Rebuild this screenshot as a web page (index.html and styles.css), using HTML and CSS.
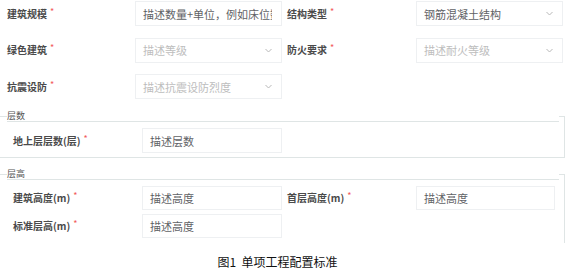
FILE: index.html
```html
<!DOCTYPE html>
<html lang="zh">
<head>
<meta charset="utf-8">
<link rel="stylesheet" href="styles.css">
</head>
<body>
<div class="page">
  <div class="grid top">
    <div class="label">建筑规模<span class="req">*</span></div>
    <div class="input"><span class="val clip">描述数量+单位，例如床位数</span></div>
    <div class="label">结构类型<span class="req">*</span></div>
    <div class="input select"><span class="val">钢筋混凝土结构</span><svg class="chev" width="7" height="5" viewBox="0 0 7 5"><path d="M0.5 1 L3.5 4 L6.5 1" fill="none" stroke="#b8b8b8" stroke-width="1"/></svg></div>

    <div class="label">绿色建筑<span class="req">*</span></div>
    <div class="input select"><span class="ph">描述等级</span><svg class="chev" width="7" height="5" viewBox="0 0 7 5"><path d="M0.5 1 L3.5 4 L6.5 1" fill="none" stroke="#b8b8b8" stroke-width="1"/></svg></div>
    <div class="label">防火要求<span class="req">*</span></div>
    <div class="input select"><span class="ph">描述耐火等级</span><svg class="chev" width="7" height="5" viewBox="0 0 7 5"><path d="M0.5 1 L3.5 4 L6.5 1" fill="none" stroke="#b8b8b8" stroke-width="1"/></svg></div>

    <div class="label">抗震设防<span class="req">*</span></div>
    <div class="input select"><span class="ph">描述抗震设防烈度</span><svg class="chev" width="7" height="5" viewBox="0 0 7 5"><path d="M0.5 1 L3.5 4 L6.5 1" fill="none" stroke="#b8b8b8" stroke-width="1"/></svg></div>
  </div>

  <fieldset class="group first">
    <legend>层数</legend>
    <div class="grid inner">
      <div class="label">地上层层数(层)<span class="req">*</span></div>
      <div class="input"><span class="val">描述层数</span></div>
    </div>
  </fieldset>

  <fieldset class="group second">
    <legend>层高</legend>
    <div class="grid inner rows2">
      <div class="label">建筑高度(m)<span class="req">*</span></div>
      <div class="input"><span class="val">描述高度</span></div>
      <div class="label">首层高度(m)<span class="req">*</span></div>
      <div class="input"><span class="val">描述高度</span></div>
      <div class="label">标准层高(m)<span class="req">*</span></div>
      <div class="input"><span class="val">描述高度</span></div>
    </div>
  </fieldset>

  <div class="caption">图1&nbsp;&nbsp;单项工程配置标准</div>
</div>
</body>
</html>
```

FILE: styles.css
```css
* { box-sizing: border-box; }
html, body { margin: 0; padding: 0; background: #fff; }
body {
  font-family: "Noto Sans CJK SC", "Noto Sans", sans-serif;
  width: 572px;
  height: 272px;
  overflow: hidden;
}
.page { width: 572px; }

.grid {
  display: grid;
  align-items: center;
}
.top {
  padding-top: 1px;
  grid-template-columns: 135px 147px 134px 147px;
  grid-auto-rows: 25px;
  row-gap: 11.5px;
}
.top .label { padding-left: 7px; }
.top .label:nth-child(4n+3) { padding-left: 5px; }

.label {
  font-size: 10px;
  font-weight: 700;
  color: #4a4a4a;
  white-space: nowrap;
  display: flex;
  align-items: center;
  line-height: 12px;
}
.req {
  color: #f25a5a;
  font-weight: 400;
  font-size: 9px;
  margin-left: 3px;
  position: relative;
  top: -2px;
}

.input {
  height: 25px;
  border: 1px solid #eef0f2;
  display: flex;
  align-items: center;
  padding: 0 9px 0 7px;
  font-size: 11px;
  overflow: hidden;
  white-space: nowrap;
}
.val { color: #5f6266; }
.ph { color: #bdbdbd; }
.clip { overflow: hidden; }
.select { justify-content: space-between; }
.chev { flex: none; }

.group {
  margin: 12px 0 0 0;
  width: 565px;
  border: 1px solid #dfe5e5;
  border-left: none;
  padding: 6px 5px 4px 7px;
  min-width: 0;
}
.group legend {
  width: 100%;
  padding: 0;
  font-size: 9px;
  line-height: 10px;
  color: #555;
  border-bottom: 1px solid #dfe5e5;
  background: #fff;
}
.inner {
  padding-left: 6px;
  grid-template-columns: 129px 140px 134px 139px;
  grid-auto-rows: 25px;
}
.second {
  margin-top: 11px;
  border-bottom: none;
  padding-bottom: 5px;
}
.rows2 {
  grid-auto-rows: 24px;
  row-gap: 4px;
}
.rows2 .input { height: 24px; }
.inner .label:nth-child(4n+3) { padding-left: 5px; }

.caption {
  width: 555px;
  margin-top: 12px;
  text-align: center;
  font-size: 12px;
  line-height: 14px;
  color: #111;
}
```
